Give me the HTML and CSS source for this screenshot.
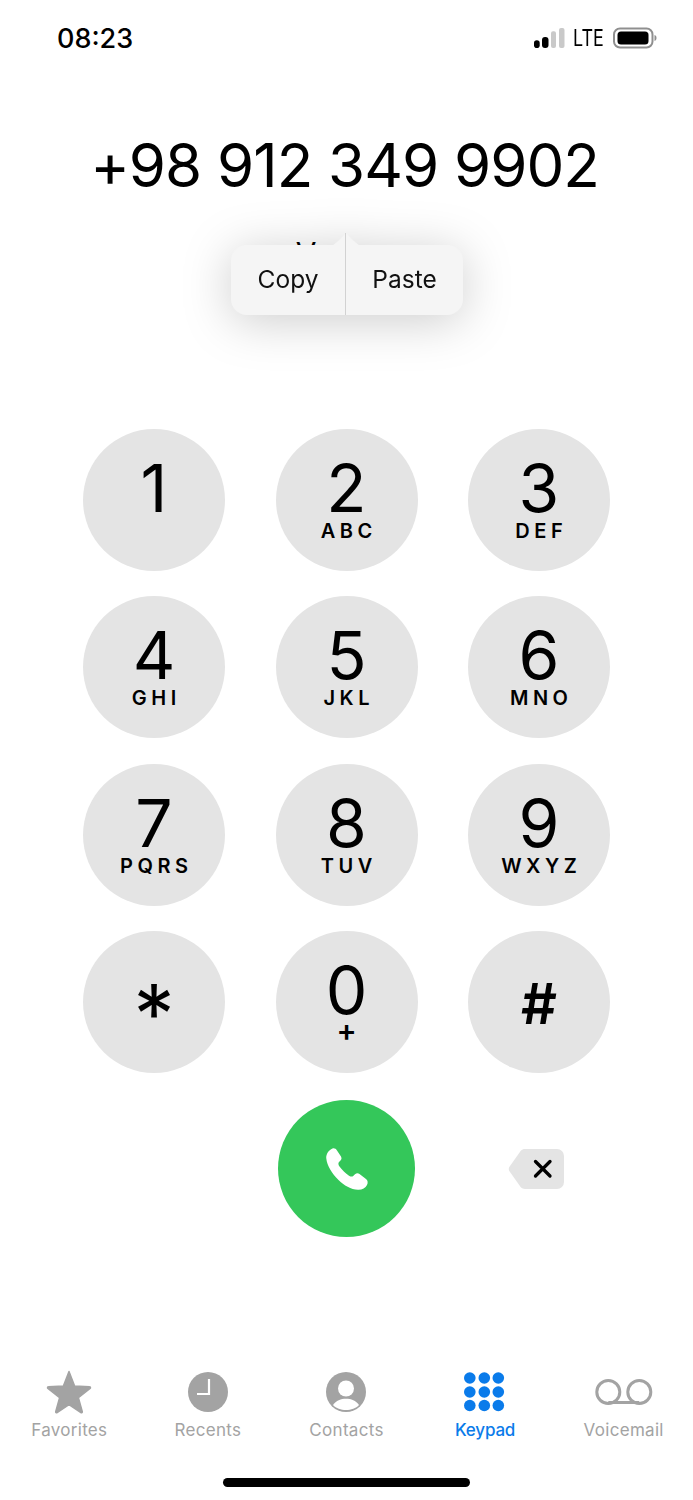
FILE: index.html
```html
<!DOCTYPE html>
<html lang="en">
<head>
<meta charset="utf-8">
<title>Keypad</title>
<link rel="stylesheet" href="styles.css">
</head>
<body>
<main class="screen">
  <header class="status">
    <span class="time">08:23</span>
    <div class="status-right">
      <svg class="signal" width="31" height="20" viewBox="0 0 31 20"><rect x="0" y="12.300" width="5.700" height="7.700" rx="2.800" fill="#000"/><rect x="8" y="9" width="6.500" height="11" rx="3" fill="#000"/><rect x="17" y="3.300" width="5" height="16.700" rx="2" fill="#c9c9c9"/><rect x="25" y="0" width="5.500" height="20" rx="2" fill="#c9c9c9"/></svg>
      <span class="lte">LTE</span>
      <svg class="battery" width="44" height="22" viewBox="0 0 44 22"><rect x="1" y="1.500" width="38.500" height="19" rx="6" fill="none" stroke="#8f8f8f" stroke-width="2"/><rect x="4.500" y="4.500" width="31" height="13" rx="3.500" fill="#000"/><path d="M41.500 8c1.500.4 2 1.600 2 3s-.5 2.600-2 3z" fill="#8f8f8f"/></svg>
    </div>
  </header>

  <h1 class="number">+98 912 349 9902</h1>
  <p class="add">V</p>

  <section class="keypad">
    <button class="key"><span class="digit">1</span></button>
    <button class="key"><span class="digit">2</span><span class="letters">ABC</span></button>
    <button class="key"><span class="digit">3</span><span class="letters">DEF</span></button>
    <button class="key"><span class="digit">4</span><span class="letters">GHI</span></button>
    <button class="key"><span class="digit">5</span><span class="letters">JKL</span></button>
    <button class="key"><span class="digit">6</span><span class="letters">MNO</span></button>
    <button class="key"><span class="digit">7</span><span class="letters">PQRS</span></button>
    <button class="key"><span class="digit">8</span><span class="letters">TUV</span></button>
    <button class="key"><span class="digit">9</span><span class="letters">WXYZ</span></button>
    <button class="key"><span class="star">*</span></button>
    <button class="key"><span class="digit">0</span><span class="plus">+</span></button>
    <button class="key"><span class="hash">#</span></button>
  </section>

  <section class="actions">
    <button class="call" aria-label="Call">
      <svg width="44" height="44" viewBox="0 0 44 44"><path d="M7.500 1.500C9.500 1 11 2 12 3.500L16 9.500C17 11.500 16.500 12.800 15 14L13.800 15.200C13 16.500 13.500 18 14.500 19.500C17 23 20.500 26.500 24 28.700C25.800 29.700 27 30 28.200 29L30 27.300C31.500 26.200 33 26 34.500 27L41 32C43 33.500 43 36 42 38C40.500 41 37 43 33 42.800C26 42.500 19 38.500 13.500 33C7 26.500 2 18.500 1.300 11.500C.9 7.500 3.500 3 7.500 1.500Z" fill="#fff"/></svg>
    </button>
    <button class="delete" aria-label="Delete">
      <svg width="58" height="42" viewBox="0 0 58 42"><path d="M17 1h32a7 7 0 0 1 7 7v26a7 7 0 0 1-7 7H17c-1.600 0-3-.6-4.200-1.700L2 24c-1.700-1.700-1.700-4.300 0-6L12.800 2.700C14 1.600 15.400 1 17 1z" fill="#e4e4e4"/><path d="M27.500 13.500l14.500 14.500m0-14.500l-14.500 14.500" stroke="#000" stroke-width="3.300" stroke-linecap="round" fill="none"/></svg>
    </button>
  </section>

  <nav class="tabs">
    <div class="tab">
      <svg class="tab-icon" width="46" height="46" viewBox="0 0 46 46"><path d="M23 3.500l5.600 14.600 15 .7c.9 0 1.200 1.100 .5 1.700L32.400 29.600l3.900 14c.2 .9-.7 1.500-1.400 1L23 36.700l-11.900 7.900c-.7 .5-1.600-.1-1.400-1l3.900-14L1.900 20.500c-.7-.6-.4-1.700 .5-1.700l15-.7L23 3.500z" fill="#a3a3a3" stroke="#a3a3a3" stroke-width="1.500" stroke-linejoin="round"/></svg>
      <span>Favorites</span>
    </div>
    <div class="tab">
      <svg class="tab-icon" width="46" height="46" viewBox="0 0 46 46"><circle cx="23" cy="24" r="20" fill="#a3a3a3"/><path d="M24 11v15H12" fill="none" stroke="#fff" stroke-width="2.200"/></svg>
      <span>Recents</span>
    </div>
    <div class="tab">
      <svg class="tab-icon" width="46" height="46" viewBox="0 0 46 46"><circle cx="23" cy="24" r="20" fill="#a3a3a3"/><circle cx="23" cy="20.500" r="8" fill="#fff"/><path d="M10 37C13 32.500 18 30.700 23 30.700S33 32.500 36 37C33 40.500 28 42 23 42S13 40.500 10 37z" fill="#fff"/></svg>
      <span>Contacts</span>
    </div>
    <div class="tab active">
      <svg class="tab-icon" width="46" height="46" viewBox="0 0 46 46" fill="#0a7bea"><circle cx="7.800" cy="10" r="5.800"/><circle cx="22.300" cy="10" r="5.800"/><circle cx="36.300" cy="10" r="5.800"/><circle cx="7.800" cy="24" r="5.800"/><circle cx="22.300" cy="24" r="5.800"/><circle cx="36.300" cy="24" r="5.800"/><circle cx="7.800" cy="37.500" r="5.800"/><circle cx="22.300" cy="37.500" r="5.800"/><circle cx="36.300" cy="37.500" r="5.800"/></svg>
      <span>Keypad</span>
    </div>
    <div class="tab">
      <svg class="tab-icon" width="60" height="46" viewBox="0 0 60 46"><circle cx="14.300" cy="24" r="11.500" fill="none" stroke="#a3a3a3" stroke-width="3"/><circle cx="45.300" cy="24" r="11.500" fill="none" stroke="#a3a3a3" stroke-width="3"/><path d="M14.300 34.500h31" stroke="#a3a3a3" stroke-width="3"/></svg>
      <span>Voicemail</span>
    </div>
  </nav>

  <div class="home-bar"></div>

  <div class="popup">
    <svg class="popup-tip" width="60" height="16" viewBox="0 0 60 16"><path d="M6 16c4 0 7 0 10-3 5-4 10-8 14-13 4 5 9 9 14 13 3 3 6 3 10 3z" fill="#f5f5f5"/><path d="M29.500 0v16" stroke="#d2d2d2" stroke-width="1"/></svg>
    <div class="popup-body">
      <span class="popup-item">Copy</span>
      <span class="popup-item">Paste</span>
    </div>
  </div>
</main>
</body>
</html>
```
FILE: styles.css
```css
* { box-sizing: border-box; }
html, body { margin: 0; padding: 0; background: #fff; }
body { font-family: Inter, "Liberation Sans", sans-serif; color: #000; }
.screen {
  position: relative;
  width: 693px;
  height: 1500px;
  overflow: hidden;
  display: flex;
  flex-direction: column;
}
button { border: 0; padding: 0; margin: 0; font: inherit; color: inherit; background: none; }

.status {
  height: 76px;
  padding: 0 36px 0 57px;
  display: flex;
  justify-content: space-between;
  align-items: center;
}
.time { font-size: 27px; font-weight: 500; }
.status-right { display: flex; align-items: center; gap: 8px; }
.lte {
  font-size: 23px;
  font-weight: 400;
  width: 32px;
  transform: scaleX(.78);
  transform-origin: left center;
}

.number {
  margin: 46px 0 0;
  padding-right: 4px;
  height: 86px;
  font-size: 60px;
  line-height: 86px;
  font-weight: 400;
  letter-spacing: -1px;
  text-align: center;
  white-space: nowrap;
}
.add {
  margin: 25px 0 0;
  padding-right: 81px;
  height: 40px;
  font-size: 30px;
  line-height: 40px;
  text-align: center;
}

.keypad {
  margin-top: 155.700px;
  display: grid;
  grid-template-columns: repeat(3, 142px);
  grid-auto-rows: 142px;
  column-gap: 50.5px;
  row-gap: 25.5px;
  justify-content: center;
}
.key {
  width: 142px;
  height: 142px;
  border-radius: 50%;
  background: #e4e4e4;
  display: flex;
  flex-direction: column;
  align-items: center;
  padding-top: 26px;
}
.digit { font-size: 66px; line-height: 66px; font-weight: 400; }
.letters {
  font-size: 20px;
  line-height: 20px;
  font-weight: 600;
  letter-spacing: 4.500px;
  margin-right: -4.500px;
}
.plus { font-size: 30px; line-height: 14px; font-weight: 600; }
.star { font-size: 82px; line-height: 90px; margin-top: 13px; font-weight: 400; }
.hash { font-size: 56px; line-height: 70px; margin-top: 12px; font-weight: 600; }

.actions {
  margin-top: 27px;
  display: grid;
  grid-template-columns: repeat(3, 142px);
  column-gap: 50.5px;
  justify-content: center;
  align-items: center;
}
.call {
  grid-column: 2;
  justify-self: center;
  width: 137px;
  height: 137px;
  border-radius: 50%;
  background: #34c75a;
  display: flex;
  align-items: center;
  justify-content: center;
}
.delete { grid-column: 3; justify-self: center; display: flex; margin-right: 5px; }

.tabs {
  margin-top: auto;
  display: grid;
  grid-template-columns: repeat(5, 1fr);
  height: 80px;
}
.tab {
  display: flex;
  flex-direction: column;
  align-items: center;
  color: #a3a3a3;
  font-size: 17px;
  line-height: 20px;
  font-weight: 400;
  letter-spacing: 0.3px;
  white-space: nowrap;
}
.tab-icon { height: 46px; flex: none; }
.tab span { margin-top: 6px; }
.tab.active { color: #0a7bea; font-weight: 500; letter-spacing: -0.2px; }

.home-bar {
  margin: 30px auto 13px;
  width: 247px;
  height: 9px;
  border-radius: 5px;
  background: #000;
  flex: none;
}

.popup {
  position: absolute;
  left: 231px;
  top: 233px;
  width: 232px;
  filter: drop-shadow(0 6px 24px rgba(0, 0, 0, .2));
}
.popup-tip { display: block; margin: 0 0 -4px 85px; }
.popup-body {
  height: 70px;
  background: #f5f5f5;
  border-radius: 16px;
  display: grid;
  grid-template-columns: 114px 1fr;
  font-size: 24.500px;
  line-height: 68px;
  text-align: center;
  color: #111;
}
.popup-item + .popup-item { border-left: 1px solid #d2d2d2; }
```
